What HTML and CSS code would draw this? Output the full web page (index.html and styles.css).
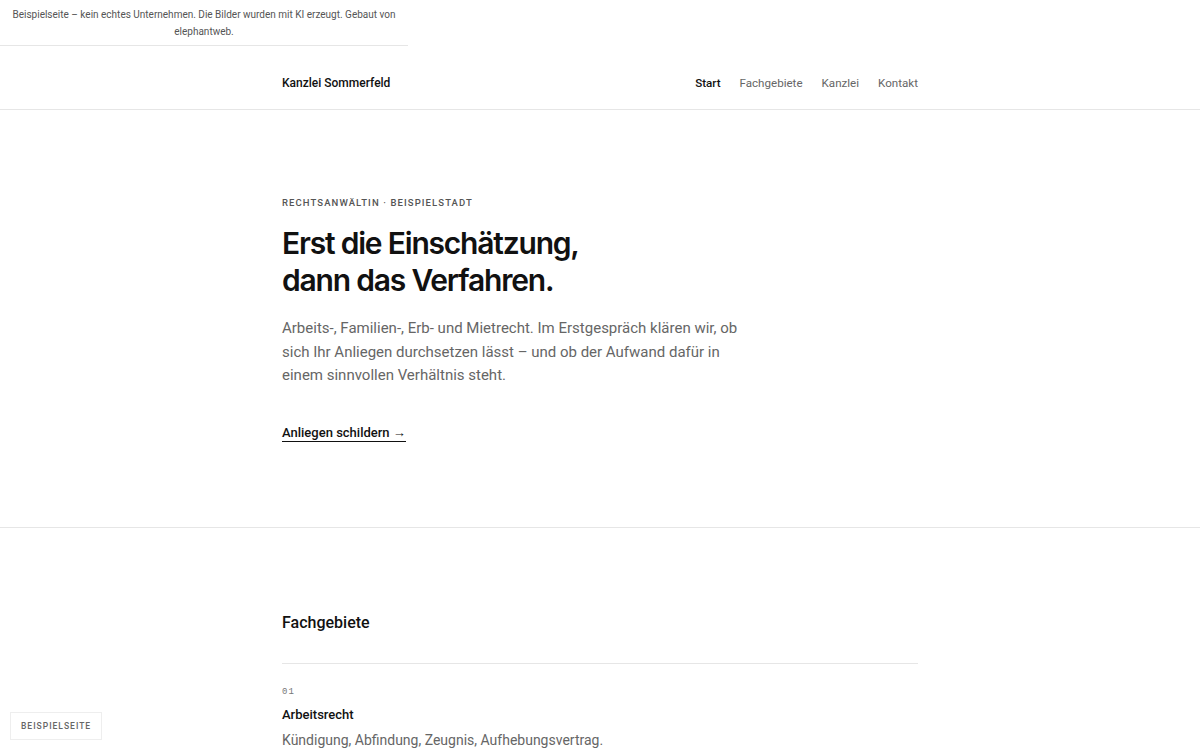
FILE: index.html
```html
<!DOCTYPE html>
<html lang="de">
<head>
    <meta charset="UTF-8">
    <meta name="viewport" content="width=device-width, initial-scale=1.0">
    <title>Kanzlei Sommerfeld</title>
    <link rel="stylesheet" href="styles.css">
</head>
<body>

    <!-- Hinweis oben -->
    <div class="notice">
        Beispielseite – kein echtes Unternehmen. Die Bilder wurden mit KI erzeugt. Gebaut von elephantweb.
    </div>

    <!-- Kopfzeile -->
    <header class="site-header">
        <div class="container header-inner">
            <a href="#" class="brand">Kanzlei Sommerfeld</a>
            <nav class="nav">
                <a href="#" class="active">Start</a>
                <a href="#">Fachgebiete</a>
                <a href="#">Kanzlei</a>
                <a href="#">Kontakt</a>
            </nav>
        </div>
    </header>

    <!-- Hero -->
    <section class="hero">
        <div class="container">
            <p class="eyebrow">Rechtsanwältin · Beispielstadt</p>
            <h1>Erst die Einschätzung,<br>dann das Verfahren.</h1>
            <p class="lead">Arbeits-, Familien-, Erb- und Mietrecht. Im Erstgespräch klären wir, ob sich Ihr Anliegen durchsetzen lässt – und ob der Aufwand dafür in einem sinnvollen Verhältnis steht.</p>
            <a href="#" class="cta">Anliegen schildern →</a>
        </div>
    </section>

    <!-- Fachgebiete -->
    <section class="areas">
        <div class="container">
            <h2>Fachgebiete</h2>
            <div class="area">
                <span class="area-num">01</span>
                <h3>Arbeitsrecht</h3>
                <p>Kündigung, Abfindung, Zeugnis, Aufhebungsvertrag.</p>
            </div>
        </div>
    </section>

    <div class="badge">Beispielseite</div>

</body>
</html>
```

FILE: styles.css
```css
/* Grundlagen */
body {
    font-family: "Roboto", "Liberation Sans", sans-serif;
    background-color: #fff;
    color: #111;
    margin: 0;
    padding: 0;
}

a {
    color: inherit;
    text-decoration: none;
}

.container {
    width: 636px;
    margin: 0 auto;
}

/* Hinweis */
.notice {
    width: 404px;
    padding: 6px 2px 5px;
    font-size: 10px;
    line-height: 17px;
    color: #555;
    text-align: center;
    border-bottom: 1px solid #e6e6e6;
}

/* Kopfzeile */
.site-header {
    border-bottom: 1px solid #e6e6e6;
}

.header-inner {
    display: flex;
    justify-content: space-between;
    align-items: center;
    padding: 27px 0 16px;
}

.brand {
    font-size: 12px;
    font-weight: 500;
    line-height: 20px;
}

.nav {
    display: flex;
    gap: 19px;
}

.nav a {
    font-size: 11.6px;
    line-height: 20px;
    color: #666;
}

.nav a.active {
    color: #111;
    font-weight: 500;
}

/* Hero */
.hero {
    padding: 87px 0 85px;
    border-bottom: 1px solid #e6e6e6;
}

.eyebrow {
    margin: 0 0 17px;
    font-size: 9.5px;
    font-weight: 500;
    letter-spacing: 1.1px;
    text-transform: uppercase;
    color: #555;
}

h1 {
    margin: 0 0 18px;
    font-family: "Inter", "Roboto", sans-serif;
    font-size: 30px;
    line-height: 37px;
    font-weight: 600;
    letter-spacing: -1.2px;
}

.lead {
    max-width: 462px;
    margin: 0 0 34px;
    font-size: 15px;
    line-height: 23.5px;
    color: #666;
}

.cta {
    display: inline-block;
    font-size: 13px;
    font-weight: 500;
    padding-bottom: 1px;
    border-bottom: 1px solid #111;
}

/* Fachgebiete */
.areas {
    padding: 85px 0 40px;
}

.areas h2 {
    margin: 0 0 31px;
    font-size: 16px;
    font-weight: 500;
}

.area {
    border-top: 1px solid #e6e6e6;
    padding-top: 23px;
}

.area-num {
    display: block;
    font-family: "Liberation Mono", monospace;
    font-size: 9px;
    letter-spacing: 1px;
    color: #777;
    margin-bottom: 10px;
}

.area h3 {
    margin: 0 0 10px;
    font-size: 13px;
    font-weight: 500;
}

.area p {
    margin: 0;
    font-size: 14px;
    color: #666;
}

/* Hinweis-Badge unten links */
.badge {
    position: fixed;
    left: 10px;
    bottom: 10px;
    padding: 8px 10px;
    font-size: 8.5px;
    font-weight: 500;
    letter-spacing: 1px;
    text-transform: uppercase;
    color: #666;
    background: #fff;
    border: 1px solid #eee;
}
```
